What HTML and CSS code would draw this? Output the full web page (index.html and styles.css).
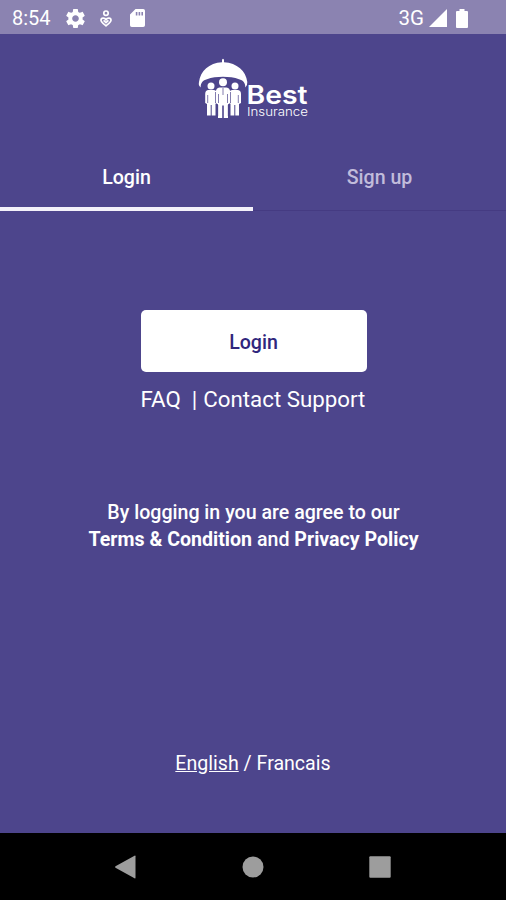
FILE: index.html
```html
<!DOCTYPE html>
<html lang="en">
<head>
    <meta charset="UTF-8">
    <meta name="viewport" content="width=device-width, initial-scale=1.0">
    <title>Best Insurance</title>
    <link rel="stylesheet" href="styles.css">
</head>
<body>
    <div class="screen">
        <!-- Status bar -->
        <div class="status-bar">
            <span class="status-time">8:54</span>
            <svg class="icon-gear" viewBox="2 2 20 20">
                <path d="M19.43 12.98c.04-.32.07-.64.07-.98s-.03-.66-.07-.98l2.11-1.65c.19-.15.24-.42.12-.64l-2-3.46c-.12-.22-.39-.3-.61-.22l-2.49 1c-.52-.4-1.08-.73-1.69-.98l-.38-2.65C14.46 2.18 14.25 2 14 2h-4c-.25 0-.46.18-.49.42l-.38 2.65c-.61.25-1.17.59-1.69.98l-2.49-1c-.23-.09-.49 0-.61.22l-2 3.46c-.13.22-.07.49.12.64l2.11 1.65c-.04.32-.07.65-.07.98s.03.66.07.98l-2.11 1.65c-.19.15-.24.42-.12.64l2 3.46c.12.22.39.3.61.22l2.49-1c.52.4 1.08.73 1.69.98l.38 2.65c.03.24.24.42.49.42h4c.25 0 .46-.18.49-.42l.38-2.65c.61-.25 1.17-.59 1.69-.98l2.49 1c.23.09.49 0 .61-.22l2-3.46c.12-.22.07-.49-.12-.64l-2.11-1.65zM12 15.5c-1.93 0-3.5-1.57-3.5-3.5s1.57-3.5 3.5-3.5 3.5 1.57 3.5 3.5-1.57 3.5-3.5 3.5z"/>
            </svg>
            <svg class="icon-heart" viewBox="0 0 12 17">
                <circle cx="6" cy="3.2" r="2.2"/>
                <path d="M6 9.8C4.8 7.6 1 7.6 1 10.3c0 2 2.6 3.6 5 5.5 2.4-1.9 5-3.5 5-5.5 0-2.7-3.8-2.7-5-.5z"/>
                <path d="M3.6 10.4 6 12.6l2.4-2.2"/>
            </svg>
            <svg class="icon-sd" viewBox="0 0 15 18">
                <path fill-rule="evenodd" d="M5.5 0H13.2Q15 0 15 1.8V16.2Q15 18 13.2 18H1.8Q0 18 0 16.2V5.5zM5.8 3V6.6H7.4V3zM8.6 3V6.6H10.2V3zM11.4 3V6.6H13V3z"/>
            </svg>
            <span class="status-network">3G</span>
            <svg class="icon-signal" viewBox="0 0 18 18"><path d="M18 0V18H0z"/></svg>
            <svg class="icon-battery" viewBox="0 0 12 19">
                <path d="M3.5 0h5v2H11q1 0 1 1v15q0 1-1 1H1q-1 0-1-1V3q0-1 1-1h2.5z"/>
            </svg>
        </div>

        <!-- Logo -->
        <header class="header">
            <svg class="logo" viewBox="0 0 112 62">
                <path d="M25 .8q1 0 1 1.500v2C39 5 48 13 49.300 24q.3 3.500-2 5.500c.3-4.500-2.300-7.500-6.300-8.300C32 18 18 18 9 21.200c-4 .8-6.600 3.800-6.300 8.300-2.300-2-2-3.500-1.700-5.500C2.500 13 11 5 24 4.300v-2Q24 .8 25 .8z"/>
                <g>
                    <circle cx="13" cy="28" r="3.500"/>
                    <path d="M10 32h6q3 .5 3 4v9.500l-1.500.5v11.500h-3.800V47h-1v10.500H9V46l-1.800-1V36q0-3.500 2.800-4z"/>
                    <circle cx="37" cy="28" r="3.500"/>
                    <path d="M34 32h6q3 .5 3 4v9l-2 1v11.500h-3.700V47h-1v10.500h-3.800V46L31 45.500V36q0-3.500 3-4z"/>
                    <circle cx="25" cy="24.200" r="4"/>
                    <path d="M21.500 29.500h7q3.700.5 3.700 5V45l-2.200 1.500V60h-4.200V47.500h-1.600V60H20V46.500L17.800 45V34.500q0-4.500 3.700-5z"/>
                </g>
                <path class="logo-lines" d="M25 30v7M9.700 37v8M40.300 37v8M20.500 36v9M29.500 36v9M17.500 34v11l2.200 2v11M32.500 34v11l-2.200 2v11"/>
                <text class="logo-best" x="48.500" y="46" textLength="61" lengthAdjust="spacingAndGlyphs">Best</text>
                <text class="logo-insurance" x="49" y="58" textLength="61" lengthAdjust="spacingAndGlyphs">Insurance</text>
            </svg>
        </header>

        <!-- Tabs -->
        <nav class="tabs">
            <a class="tab active">Login</a>
            <a class="tab">Sign up</a>
        </nav>

        <main class="content">
            <button class="login-btn">Login</button>
            <div class="links"><a>FAQ</a><span class="links-divider">|</span><a>Contact Support</a></div>
            <p class="terms">By logging in you are agree to our<br><b>Terms &amp; Condition</b> and <b>Privacy Policy</b></p>
            <div class="languages"><a class="selected">English</a> / <a>Francais</a></div>
        </main>

        <!-- System navigation -->
        <div class="nav-bar">
            <svg viewBox="0 0 24 24"><path d="M21.5 1.2V22.8q0 1-1 .5L1.5 12.7q-1-.7 0-1.400L20.5.7q1-.5 1 .5z"/></svg>
            <svg viewBox="0 0 24 24"><circle cx="12" cy="12" r="10.500"/></svg>
            <svg viewBox="0 0 24 24"><rect x="1.300" y="1.300" width="21.400" height="21.400" rx="1"/></svg>
        </div>
    </div>
</body>
</html>
```

FILE: styles.css
```css
body {
    margin: 0;
    font-family: Roboto, "Liberation Sans", sans-serif;
    color: #fff;
}

.screen {
    display: flex;
    flex-direction: column;
    height: 900px;
    background-color: #4d458c;
}

.status-bar {
    display: flex;
    align-items: center;
    box-sizing: border-box;
    height: 34px;
    padding: 2px 38px 0 12px;
    background-color: #8b83b1;
    font-size: 20px;
}

.status-bar svg {
    fill: #fff;
}

.status-time {
    width: 54px;
}

.icon-gear {
    width: 19px;
    height: 19px;
}

.status-bar .icon-heart {
    width: 12px;
    height: 17px;
    margin-left: 15px;
    fill: none;
    stroke: #fff;
    stroke-width: 1.7;
}

.icon-sd {
    width: 15px;
    height: 18px;
    margin-left: 18px;
}

.status-network {
    margin-left: auto;
    font-size: 20.5px;
}

.icon-signal {
    width: 18px;
    height: 18px;
    margin-left: 5px;
}

.icon-battery {
    width: 12px;
    height: 19px;
    margin-left: 9px;
}

/* Logo */
.header {
    display: flex;
    justify-content: center;
    height: 86px;
    padding: 24px 0 0 2px;
}

.logo {
    width: 112px;
    height: 62px;
    fill: #fff;
}

.logo-lines {
    fill: none;
    stroke: #4d458c;
    stroke-width: 0.7;
}

.logo-best {
    font: 600 25.5px Inter, sans-serif;
}

.logo-insurance {
    font: 300 12px Inter, sans-serif;
}

/* Tabs */
.tabs {
    display: flex;
    height: 67px;
}

.tab {
    flex: 1;
    box-sizing: border-box;
    padding: 22px 0 0;
    border-bottom: 1px solid #453b82;
    color: #c1bcdb;
    font-size: 19.6px;
    font-weight: 500;
    line-height: 24px;
    text-align: center;
}

.tab.active {
    border-bottom: 4px solid #f3f1fa;
    color: #fff;
}

.content {
    display: flex;
    flex: 1;
    flex-direction: column;
    align-items: center;
}

.login-btn {
    width: 226px;
    height: 62px;
    margin: 99px 0 0 1px;
    padding: 3px 0 0;
    border: none;
    border-radius: 5px;
    background-color: #fff;
    color: #30267c;
    font-family: inherit;
    font-size: 19.6px;
    font-weight: 500;
}

.links {
    display: flex;
    margin-top: 13px;
    font-size: 22.3px;
    line-height: 28px;
}

.links-divider {
    margin: 0 6px 0 11px;
}

.terms {
    margin: 86px 0 0 1px;
    font-size: 19.6px;
    font-weight: 500;
    line-height: 27px;
    text-align: center;
}

.terms b {
    font-weight: 700;
}

.languages {
    margin-top: auto;
    padding-bottom: 56px;
    font-size: 19.6px;
    line-height: 26px;
}

.languages .selected {
    text-decoration: underline;
}

/* System navigation */
.nav-bar {
    display: flex;
    justify-content: space-between;
    align-items: center;
    box-sizing: border-box;
    height: 67px;
    padding: 0 114px;
    background-color: #000;
}

.nav-bar svg {
    width: 24px;
    height: 24px;
    fill: #9d9d9d;
}
```
